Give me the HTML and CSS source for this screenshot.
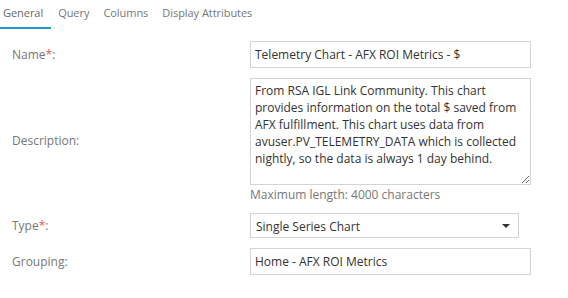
FILE: index.html
```html
<!DOCTYPE html>
<html lang="en">
<head>
  <meta charset="UTF-8">
  <title>Chart Properties</title>
  <link rel="stylesheet" href="styles.css">
</head>
<body>
  <div class="tabs">
    <a class="tab active">General</a>
    <a class="tab">Query</a>
    <a class="tab">Columns</a>
    <a class="tab">Display Attributes</a>
  </div>

  <form class="props">
    <label class="lbl" for="name">Name<span class="req">*</span>:</label>
    <div class="ctl">
      <input type="text" id="name" class="field" value="Telemetry Chart - AFX ROI Metrics - $">
    </div>

    <label class="lbl" for="desc">Description:</label>
    <div class="ctl">
      <textarea id="desc" class="field area">From RSA IGL Link Community. This chart provides information on the total $ saved from AFX fulfillment. This chart uses data from avuser.PV_TELEMETRY_DATA which is collected nightly, so the data is always 1 day behind.</textarea>
      <div class="hint">Maximum length: 4000 characters</div>
    </div>

    <label class="lbl" for="type">Type<span class="req">*</span>:</label>
    <div class="ctl">
      <div class="select">
        <span>Single Series Chart</span>
        <span class="caret"></span>
      </div>
    </div>

    <label class="lbl" for="grouping">Grouping:</label>
    <div class="ctl">
      <input type="text" id="grouping" class="field" value="Home - AFX ROI Metrics">
    </div>
  </form>
</body>
</html>
```

FILE: styles.css
```css
body {
  margin: 0;
  font-family: "Open Sans", Arial, sans-serif;
  background: #fff;
  color: #333;
}
.tabs {
  display: flex;
  height: 29px;
}
.tab {
  font-size: 11px;
  letter-spacing: -0.05px;
  color: #777;
  padding: 5px 7px 0 7px;
  line-height: 16px;
}
.tab.active {
  color: #666;
  padding-left: 3px;
  padding-right: 8px;
  border-bottom: 2px solid #1a9ad6;
}
.props {
  display: grid;
  grid-template-columns: 238px 281px;
  row-gap: 10px;
  padding: 12px 0 0 12px;
}
.lbl {
  align-self: center;
  font-size: 12px;
  color: #777;
}
.req {
  color: #f0573e;
}
.field {
  box-sizing: border-box;
  width: 281px;
  height: 27px;
  border: 1px solid #d4d4d4;
  border-radius: 0;
  padding: 0 4px;
  font-family: "Open Sans", Arial, sans-serif;
  font-size: 12px;
  color: #333;
  outline: none;
  display: block;
}
.area {
  height: 107px;
  padding: 3px 4px;
  line-height: 17px;
  resize: vertical;
}
.hint {
  font-size: 12px;
  color: #777;
  margin-top: 2px;
  line-height: 16px;
}
.select {
  box-sizing: border-box;
  width: 269px;
  height: 25px;
  border: 1px solid #d4d4d4;
  display: flex;
  align-items: center;
  justify-content: space-between;
  padding: 1px 8px 0 5px;
  font-size: 12px;
  color: #333;
}
.caret {
  width: 0;
  height: 0;
  border-left: 4px solid transparent;
  border-right: 4px solid transparent;
  border-top: 4px solid #333;
}
```
